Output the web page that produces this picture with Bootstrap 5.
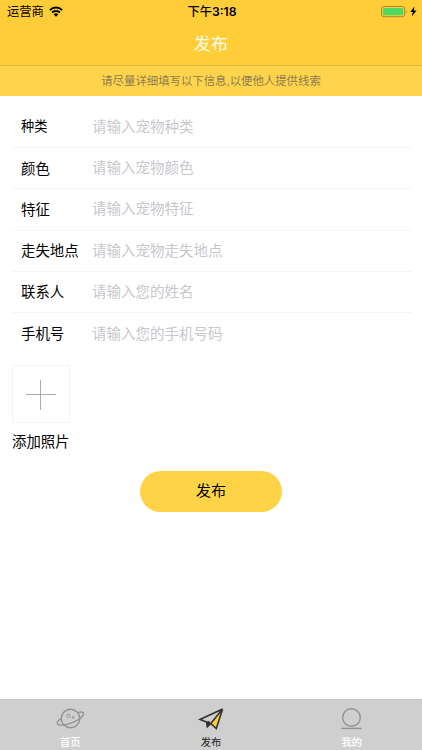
<!DOCTYPE html>
<html lang="zh-CN">
<head>
<meta charset="utf-8">
<meta name="viewport" content="width=device-width, initial-scale=1">
<title>发布</title>
<link href="https://cdn.jsdelivr.net/npm/bootstrap@5.3.0/dist/css/bootstrap.min.css" rel="stylesheet">
<style>
body{font-family:"Liberation Sans","Noto Sans CJK SC",sans-serif;color:#000;font-size:14.4px;line-height:1.4}
svg{display:block;flex:none}
.app-head{background:#ffcd38;height:66px;border-bottom:1px solid #e3b63d}
.status{height:23px;font-size:12.3px;padding:1px 5px 0 7px}
.status>*{flex:1 1 0}
.carrier{padding-top:1px}
.wifi{margin:-1px 0 0 5px}
.clock{font-family:Inter,"Noto Sans CJK SC",sans-serif;font-size:12.2px;font-weight:600}
.clock span{font-weight:500}
.app-title{height:43px;font-size:17.2px;color:#fffdf0}
.tip{background:#ffd44b;height:30px;padding-top:2px;font-size:11.4px;color:#8b7d53}
.fields{padding:11px 10px 0 11px}
.field{height:41.2px;padding-left:10px;border-bottom:1px solid #f5f5f5}
.field:last-child{border-bottom:0}
.field label{width:71px;flex:none;padding-top:1px}
.field:first-child label{font-size:13.2px}
.field input{font-size:14.5px;color:#000;outline:0;height:38px}
.field input::placeholder{color:#c7c7cc;opacity:1}
.photo{margin:11px 0 0 12px}
.photo-add{width:58px;height:58px;border:1px solid #f4f4f4}
.photo-add svg{margin-top:1px}
.photo-text{margin-top:9px;line-height:20px}
.publish{width:142px;height:41px;background:#ffd347;font-size:15.2px;margin-top:18.800px;--bs-btn-color:#000}
.tabs{height:51px;background:#cfcfcf;border-top:1px solid #c5c5c5;font-size:10.3px;color:#fff}
.tabs a{color:#fff;line-height:14px;padding-top:6px;font-weight:500}
.tabs a.on{color:#222;font-weight:400}
.tabs svg{margin-bottom:4px}
</style>
</head>
<body class="d-flex flex-column vh-100 bg-white overflow-hidden">
<header class="app-head">
  <div class="status d-flex align-items-center">
    <div class="carrier d-flex align-items-center">运营商
      <svg class="wifi" width="14" height="11" viewBox="0 0 14 11"><path d="M.9 4.1a8.7 8.7 0 0 1 12.2 0M3.1 6.5a5.5 5.5 0 0 1 7.8 0" fill="none" stroke="#000" stroke-width="2"/><path d="M4.8 8.4a3.1 3.1 0 0 1 4.4 0L7 10.7z"/></svg>
    </div>
    <div class="clock text-center"><span>下午</span>3:18</div>
    <div class="d-flex align-items-center justify-content-end">
      <svg width="36" height="12" viewBox="0 0 36 12"><rect x=".5" y=".5" width="23.2" height="10.2" rx="2.4" fill="none" stroke="#a3882d" stroke-width="1"/><rect x="2" y="2" width="20.2" height="7.2" rx="1" fill="#4cd964"/><path d="M25 3.900q1.400 1.700 0 3.400z" fill="#a3882d"/><path d="M33.500.4 29.300 6.100h2.600L30.700 10.500l4.900-6h-2.800z"/></svg>
    </div>
  </div>
  <h1 class="app-title d-flex align-items-center justify-content-center m-0 fw-normal">发布</h1>
</header>
<div class="tip d-flex align-items-center justify-content-center">请尽量详细填写以下信息,以便他人提供线索</div>
<main class="flex-grow-1">
  <form>
    <div class="fields">
      <div class="field d-flex align-items-center"><label for="f1">种类</label><input id="f1" class="form-control-plaintext p-0" placeholder="请输入宠物种类"></div>
      <div class="field d-flex align-items-center"><label for="f2">颜色</label><input id="f2" class="form-control-plaintext p-0" placeholder="请输入宠物颜色"></div>
      <div class="field d-flex align-items-center"><label for="f3">特征</label><input id="f3" class="form-control-plaintext p-0" placeholder="请输入宠物特征"></div>
      <div class="field d-flex align-items-center"><label for="f4">走失地点</label><input id="f4" class="form-control-plaintext p-0" placeholder="请输入宠物走失地点"></div>
      <div class="field d-flex align-items-center"><label for="f5">联系人</label><input id="f5" class="form-control-plaintext p-0" placeholder="请输入您的姓名"></div>
      <div class="field d-flex align-items-center"><label for="f6">手机号</label><input id="f6" class="form-control-plaintext p-0" placeholder="请输入您的手机号码"></div>
    </div>
    <div class="photo">
      <div class="photo-add d-flex align-items-center justify-content-center"><svg width="30" height="30"><path d="M0 14.5h30M14.5 0v30" stroke="#aaa"/></svg></div>
      <div class="photo-text">添加照片</div>
    </div>
    <button type="button" class="publish btn rounded-pill border-0 d-block mx-auto p-0">发布</button>
  </form>
</main>
<nav class="tabs d-flex">
  <a href="#" class="col d-flex flex-column align-items-center text-decoration-none">
    <svg width="30" height="26" viewBox="0 0 30 26"><g fill="none" stroke="#929292" stroke-width="1.4"><circle cx="15.500" cy="12.500" r="9.300"/><path d="M23.300 6.500C26.500 5.700 28.400 6 28.600 7.400 28.900 9.900 24.500 13.700 18.500 16.200 11 19.300 2.900 20.300 2.300 17.300 2.100 16 3.700 14.200 6.300 12.700"/><circle cx="13.500" cy="9.800" r="1.700" stroke-width=".9"/><circle cx="18.200" cy="11.300" r="1.100" stroke-width=".9"/></g></svg>首页</a>
  <a href="#" class="on col d-flex flex-column align-items-center text-decoration-none">
    <svg width="30" height="26" viewBox="0 0 30 26"><path d="M26.500 2.500 20 22.400l-5.500-5z" fill="#ffcd38"/><path d="M26.600 3 4 13.500l6.500 2.500M26.600 3 20.300 22.500l-5.500-5-3.500 3.300-.8-5.300M14.800 17.500 26.600 3" fill="none" stroke="#333" stroke-width="1.600"/><path d="m10.500 15.500.8 5.300 3.500-3.300-1.600-2.500z" fill="#333"/></svg>发布</a>
  <a href="#" class="col d-flex flex-column align-items-center text-decoration-none">
    <svg width="30" height="26" viewBox="0 0 30 26"><g fill="none" stroke="#929292" stroke-width="1.400"><circle cx="14.500" cy="11.500" r="8.800"/><path d="M4.200 22.400h20.500"/></g></svg>我的</a>
</nav>
<script src="https://cdn.jsdelivr.net/npm/bootstrap@5.3.0/dist/js/bootstrap.bundle.min.js"></script>
</body>
</html>
